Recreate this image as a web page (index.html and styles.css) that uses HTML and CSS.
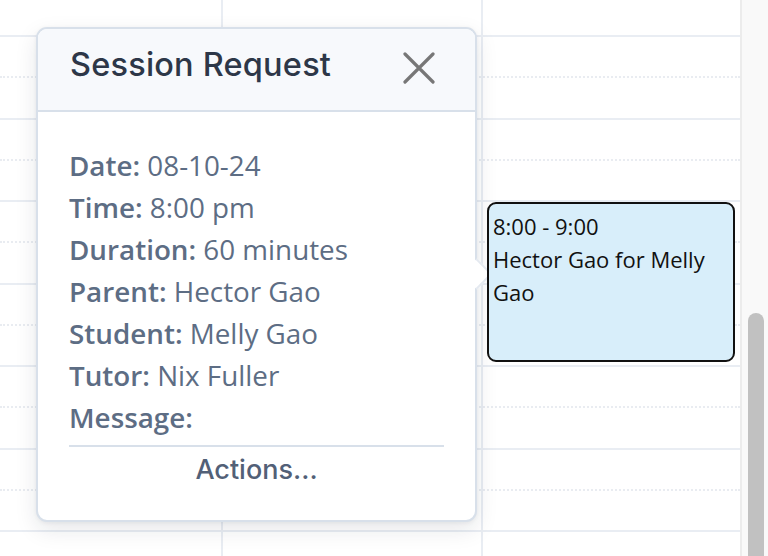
FILE: index.html
```html
<!DOCTYPE html>
<html>
<head>
<meta charset="utf-8">
<link rel="stylesheet" href="styles.css">
</head>
<body>
<div class="page">
  <div class="calendar">
    <div class="rows">
      <div class="row first"></div>
      <div class="row dotted"></div><div class="row solid"></div>
      <div class="row dotted"></div><div class="row solid"></div>
      <div class="row dotted"></div><div class="row solid"></div>
      <div class="row dotted"></div><div class="row solid"></div>
      <div class="row dotted"></div><div class="row solid"></div>
      <div class="row dotted"></div><div class="row solid"></div>
      <div class="row dotted"></div>
    </div>
    <div class="cols">
      <div class="col c1"></div>
      <div class="col c2"></div>
      <div class="col c3"></div>
    </div>

    <div class="event">
      <div>8:00 - 9:00</div>
      <div>Hector Gao for Melly Gao</div>
    </div>

    <div class="popover">
      <div class="arrow"></div>
      <div class="pop-header">
        <h2 class="pop-title">Session Request</h2>
        <button class="close" aria-label="Close">
          <svg width="32" height="32" viewBox="0 0 32 32"><path d="M2 2 L30 30 M30 2 L2 30" stroke="#777" stroke-width="3.2" stroke-linecap="round" fill="none"/></svg>
        </button>
      </div>
      <div class="pop-body">
        <div class="line"><b>Date:</b> 08-10-24</div>
        <div class="line"><b>Time:</b> 8:00 pm</div>
        <div class="line"><b>Duration:</b> 60 minutes</div>
        <div class="line"><b>Parent:</b> Hector Gao</div>
        <div class="line"><b>Student:</b> Melly Gao</div>
        <div class="line"><b>Tutor:</b> Nix Fuller</div>
        <div class="line"><b>Message:</b></div>
        <div class="actions">Actions...</div>
      </div>
    </div>
  </div>
  <div class="scrollbar"><div class="thumb"></div></div>
</div>
</body>
</html>
```

FILE: styles.css
```css
* { box-sizing: border-box; }
html, body { margin: 0; padding: 0; }
body { width: 768px; height: 556px; overflow: hidden; background: #fff; font-family: "Open Sans", sans-serif; }

.page { display: flex; height: 556px; }

.calendar { position: relative; width: 740px; height: 556px; display: grid; background: #fff; overflow: hidden; }
.rows, .cols { grid-area: 1 / 1; }

.rows { display: flex; flex-direction: column; }
.row { flex: none; height: 41.25px; }
.row.first { height: 37px; border-bottom: 2px solid #e9edf3; }
.row.solid { border-bottom: 2px solid #e9edf3; }
.row.dotted { border-bottom: 2px dotted #e9ecf1; }

.cols { display: flex; }
.col { height: 100%; }
.c1 { width: 223px; border-right: 2px solid #e9edf3; }
.c2 { width: 260px; border-right: 2px solid #e9edf3; }
.c3 { flex: 1; }

.event {
  position: absolute; left: 487px; top: 202px; width: 248px; height: 160px;
  background: #d8eefa; border: 2px solid #111; border-radius: 9px;
  padding: 6px 4px; color: #111; font-size: 22px; line-height: 33px; z-index: 3;
}

.popover {
  position: absolute; left: 36px; top: 27px; width: 441px; height: 495px;
  background: #fff; border: 2px solid #d8e0ea; border-radius: 11px;
  box-shadow: 0 8px 22px rgba(20, 30, 50, 0.10), 0 1px 4px rgba(20,30,50,0.06);
  z-index: 2;
}
.arrow {
  position: absolute; right: -13px; top: 234px; width: 22px; height: 22px;
  background: #fff; transform: rotate(45deg);
  border-top: 2px solid #e4e9f0; border-right: 2px solid #e4e9f0;
}
.pop-header {
  position: relative;
  height: 83px; background: #f7f9fc; border-bottom: 2px solid #d8e0ea;
  border-radius: 9px 9px 0 0; display: flex; align-items: center; justify-content: space-between;
  padding: 0 40px 0 32px;
}
.pop-title {
  margin: 0; font-family: "Inter", sans-serif; font-weight: 500; font-size: 32.5px; color: #2d3748;
  letter-spacing: 0.2px; position: relative; top: -5px;
}
.close { background: none; border: 0; padding: 0; width: 32px; height: 32px; display: block; position: relative; top: -2px; }
.close svg { display: block; }

.pop-body { padding: 32px 31px 0 31px; color: #5d6d84; font-size: 27.8px; }
.line { line-height: 42px; }
.line b { font-weight: 600; }
.actions {
  margin-top: 7px; border-top: 2px solid #d8e0ea; text-align: center;
  font-family: "Inter", sans-serif; font-weight: 500; font-size: 27px; color: #526077;
  line-height: 46px;
}

.scrollbar { width: 28px; height: 556px; background: #f9f9f9; border-left: 2px solid #ececec; padding-left: 6px; padding-top: 313px; }
.thumb { width: 16px; height: 260px; background: #c1c1c1; border-radius: 8px 8px 0 0; }
```
